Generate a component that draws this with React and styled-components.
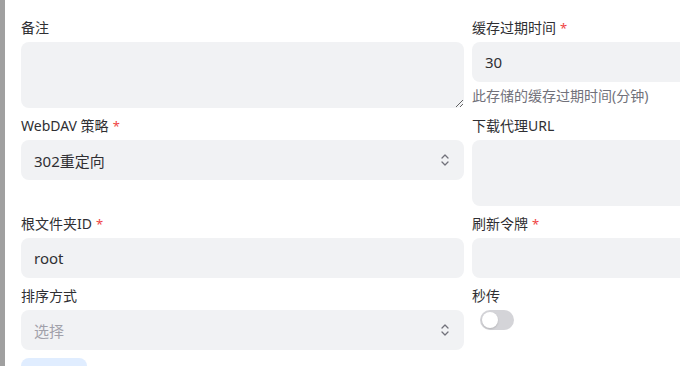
import React from "react";
import styled, { createGlobalStyle } from "styled-components";

const GlobalStyle = createGlobalStyle`
  html, body {
    margin: 0;
    padding: 0;
    background: #ffffff;
    overflow: hidden;
  }
  body {
    font-family: "Noto Sans", "Noto Sans CJK SC", sans-serif;
    color: #27272a;
  }
`;

const Page = styled.div`
  display: flex;
  height: 100vh;
`;

const SideBar = styled.div`
  flex: 0 0 5px;
  background: #a0a0a0;
`;

const Main = styled.div`
  padding: 18px 0 0 16px;
`;

const Form = styled.div`
  display: grid;
  grid-template-columns: 443px 443px;
  column-gap: 8px;
  row-gap: 8px;
`;

const Field = styled.div`
  display: flex;
  flex-direction: column;
  gap: 4px;
`;

const Label = styled.label`
  font-size: 14px;
  line-height: 20px;
  color: #2f2f33;
`;

const Star = styled.span`
  color: #ef4444;
  margin-left: 4px;
  font-size: 13px;
`;

const Help = styled.div`
  font-size: 14px;
  line-height: 20px;
  color: #71717a;
`;

const Input = styled.input`
  box-sizing: border-box;
  height: 40px;
  width: 100%;
  border: none;
  outline: none;
  border-radius: 8px;
  background: #f1f2f4;
  padding: 0 13px;
  font-family: inherit;
  font-size: 15px;
  color: #2f2f33;
`;

const TextArea = styled.textarea`
  box-sizing: border-box;
  height: 66px;
  width: 100%;
  border: none;
  outline: none;
  border-radius: 8px;
  background: #f1f2f4;
  padding: 8px 12px;
  font-family: inherit;
  font-size: 15px;
  resize: ${(p) => (p.$grip ? "vertical" : "none")};
`;

const Select = styled.div`
  box-sizing: border-box;
  height: 40px;
  display: flex;
  align-items: center;
  justify-content: space-between;
  border-radius: 8px;
  background: #f1f2f4;
  padding: 0 14px 0 13px;
  font-size: 15px;
  color: ${(p) => (p.$placeholder ? "#a1a1aa" : "#2f2f33")};
`;

const Toggle = styled.div`
  box-sizing: border-box;
  width: 34px;
  height: 20px;
  margin-left: 8px;
  border-radius: 10px;
  background: #d4d4d8;
  padding: 2px;
  display: flex;
  align-items: center;
`;

const Knob = styled.span`
  width: 16px;
  height: 16px;
  border-radius: 50%;
  background: #ffffff;
  box-shadow: 0 1px 2px rgba(0, 0, 0, 0.15);
`;

const SaveButton = styled.button`
  margin-top: 8px;
  width: 66px;
  height: 36px;
  border: none;
  border-radius: 8px;
  background: #e0edff;
`;

const UpDown = () => (
  <svg width="10" height="14" viewBox="0 0 10 14" fill="none" stroke="#71717a" strokeWidth="1.3" strokeLinecap="round" strokeLinejoin="round">
    <path d="M2 5 L5 2 L8 5" />
    <path d="M2 9 L5 12 L8 9" />
  </svg>
);

const Required = () => <Star>*</Star>;

export default function App() {
  return (
    <>
      <GlobalStyle />
      <Page>
        <SideBar />
        <Main>
          <Form>
            <Field>
              <Label>备注</Label>
              <TextArea $grip />
            </Field>
            <Field>
              <Label>
                缓存过期时间<Required />
              </Label>
              <Input defaultValue="30" />
              <Help>此存储的缓存过期时间(分钟)</Help>
            </Field>

            <Field>
              <Label>
                WebDAV 策略<Required />
              </Label>
              <Select>
                302重定向
                <UpDown />
              </Select>
            </Field>
            <Field>
              <Label>下载代理URL</Label>
              <TextArea />
            </Field>

            <Field>
              <Label>
                根文件夹ID<Required />
              </Label>
              <Input defaultValue="root" />
            </Field>
            <Field>
              <Label>
                刷新令牌<Required />
              </Label>
              <Input />
            </Field>

            <Field>
              <Label>排序方式</Label>
              <Select $placeholder>
                选择
                <UpDown />
              </Select>
            </Field>
            <Field>
              <Label>秒传</Label>
              <Toggle>
                <Knob />
              </Toggle>
            </Field>
          </Form>
          <SaveButton aria-label="保存" />
        </Main>
      </Page>
    </>
  );
}
